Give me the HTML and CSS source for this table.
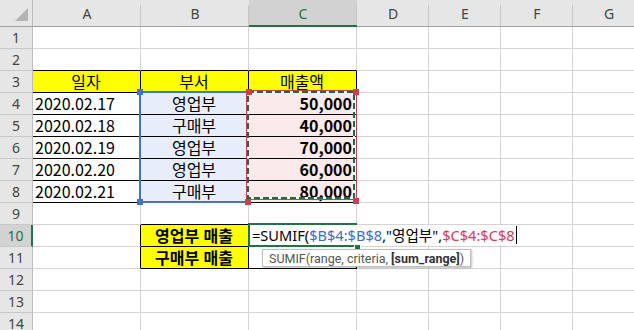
FILE: index.html
```html
<!DOCTYPE html>
<html lang="ko">
<head>
<meta charset="utf-8">
<link rel="stylesheet" href="styles.css">
</head>
<body>
<div class="sheet">
  <div class="corner"><span class="tri"></span></div>
  <div class="ch">A</div><div class="ch">B</div><div class="ch sel">C</div><div class="ch">D</div><div class="ch">E</div><div class="ch">F</div><div class="ch">G</div>

  <div class="rh">1</div><div class="c"></div><div class="c"></div><div class="c"></div><div class="c"></div><div class="c"></div><div class="c"></div><div class="c"></div>
  <div class="rh">2</div><div class="c bb"></div><div class="c bb"></div><div class="c bb"></div><div class="c"></div><div class="c"></div><div class="c"></div><div class="c"></div>
  <div class="rh">3</div><div class="c bk yel ctr">일자</div><div class="c bk yel ctr">부서</div><div class="c bk yel ctr">매출액</div><div class="c"></div><div class="c"></div><div class="c"></div><div class="c"></div>
  <div class="rh">4</div><div class="c bk">2020.02.17</div><div class="c bk blu ctr">영업부</div><div class="c bk pnk num">50,000</div><div class="c"></div><div class="c"></div><div class="c"></div><div class="c"></div>
  <div class="rh">5</div><div class="c bk">2020.02.18</div><div class="c bk blu ctr">구매부</div><div class="c bk pnk num">40,000</div><div class="c"></div><div class="c"></div><div class="c"></div><div class="c"></div>
  <div class="rh">6</div><div class="c bk">2020.02.19</div><div class="c bk blu ctr">영업부</div><div class="c bk pnk num">70,000</div><div class="c"></div><div class="c"></div><div class="c"></div><div class="c"></div>
  <div class="rh">7</div><div class="c bk">2020.02.20</div><div class="c bk blu ctr">영업부</div><div class="c bk pnk num">60,000</div><div class="c"></div><div class="c"></div><div class="c"></div><div class="c"></div>
  <div class="rh">8</div><div class="c bk">2020.02.21</div><div class="c bk blu ctr">구매부</div><div class="c bk pnk num">80,000</div><div class="c"></div><div class="c"></div><div class="c"></div><div class="c"></div>
  <div class="rh">9</div><div class="c"></div><div class="c bb"></div><div class="c bb"></div><div class="c"></div><div class="c"></div><div class="c"></div><div class="c"></div>
  <div class="rh sel">10</div><div class="c br"></div><div class="c bk yel ctr bold">영업부 매출</div><div class="c bk"></div><div class="c"></div><div class="c"></div><div class="c"></div><div class="c"></div>
  <div class="rh">11</div><div class="c br"></div><div class="c bk yel ctr bold">구매부 매출</div><div class="c bk"></div><div class="c"></div><div class="c"></div><div class="c"></div><div class="c"></div>
  <div class="rh">12</div><div class="c"></div><div class="c"></div><div class="c"></div><div class="c"></div><div class="c"></div><div class="c"></div><div class="c"></div>
  <div class="rh">13</div><div class="c"></div><div class="c"></div><div class="c"></div><div class="c"></div><div class="c"></div><div class="c"></div><div class="c"></div>
  <div class="rh">14</div><div class="c"></div><div class="c"></div><div class="c"></div><div class="c"></div><div class="c"></div><div class="c"></div><div class="c"></div>

  <div class="rng-blue"></div>
  <span class="hdl hdl-blue" style="left:137px;top:89px"></span>
  <span class="hdl hdl-blue" style="left:137px;top:199px"></span>

  <div class="rng-red">
    <svg class="ants" width="109" height="108" viewBox="0 0 109 108">
      <rect x="1" y="1" width="106" height="106" fill="none" stroke="#fff" stroke-width="2"/>
      <rect x="1" y="1" width="106" height="106" fill="none" stroke="#1e6b40" stroke-width="2" stroke-dasharray="6 3"/>
    </svg>
  </div>
  <span class="hdl hdl-red" style="left:246px;top:89px"></span>
  <span class="hdl hdl-red" style="left:353px;top:89px"></span>
  <span class="hdl hdl-red" style="left:245px;top:199px"></span>
  <span class="hdl hdl-red" style="left:353px;top:198px"></span>

  <div class="active"></div>
  <div class="edit"><span class="k">=SUMIF(</span><span class="fb">$B$4:$B$8</span><span class="k">,"영업부",</span><span class="fr">$C$4:$C$8</span><span class="caret"></span></div>
  <span class="fill"></span>

  <div class="tip">SUMIF(range, criteria, <b>[sum_range]</b>)</div>
</div>
</body>
</html>
```

FILE: styles.css
```css
html, body {
  margin: 0;
  padding: 0;
  background: #fff;
  width: 634px;
  height: 330px;
  overflow: hidden;
}

.sheet {
  position: relative;
  display: grid;
  grid-template-columns: 33px 108px 108px 108px 72px 72px 72px 72px;
  grid-template-rows: 27px repeat(14, 22px);
  font-family: "Noto Sans CJK KR", "Noto Sans", sans-serif;
  font-size: 16px;
  color: #000;
}

.corner {
  position: relative;
  background: #e6e6e6;
  border-right: 1px solid #bdbdbd;
  border-bottom: 1px solid #9e9e9e;
}
.tri {
  position: absolute;
  right: 4px;
  bottom: 5px;
  width: 0;
  height: 0;
  border-left: 13px solid transparent;
  border-bottom: 13px solid #b4b4b4;
}

.ch {
  position: relative;
  background: #e6e6e6;
  border-bottom: 1px solid #9e9e9e;
  font-family: "Noto Sans", sans-serif;
  font-size: 14px;
  color: #444;
  display: flex;
  align-items: center;
  justify-content: center;
  padding-top: 1px;
  box-sizing: border-box;
}
.ch::after {
  content: "";
  position: absolute;
  right: 0;
  top: 5px;
  bottom: 0;
  width: 1px;
  background: #c4c4c4;
}
.ch.sel {
  background: #d2d2d2;
  color: #217346;
  border-bottom: 2px solid #217346;
}

.rh {
  background: #e6e6e6;
  border-right: 1px solid #bdbdbd;
  border-bottom: 1px solid #c8c8c8;
  font-family: "Noto Sans", sans-serif;
  font-size: 14px;
  color: #444;
  display: flex;
  align-items: center;
  justify-content: center;
  box-sizing: border-box;
}
.rh.sel {
  background: #d2d2d2;
  color: #217346;
  border-right: 2px solid #217346;
}

.c {
  border-right: 1px solid #d4d4d4;
  border-bottom: 1px solid #d4d4d4;
  box-sizing: border-box;
  line-height: 21px;
  padding: 0 3px 0 2px;
  white-space: nowrap;
}
.bk { border-right-color: #000; border-bottom-color: #000; }
.bb { border-bottom-color: #000; }
.br { border-right-color: #000; }
.yel { background: #ffff00; }
.blu { background: #e7eef9; }
.pnk { background: #faeaea; }
.ctr { text-align: center; }
.num { text-align: right; font-weight: 700; padding-right: 4px; }
.bold { font-weight: 700; }

.rng-blue {
  position: absolute;
  left: 139px;
  top: 91px;
  width: 109px;
  height: 112px;
  border: 2px solid #4472c4;
  box-sizing: border-box;
}
.rng-red {
  position: absolute;
  left: 246px;
  top: 90px;
  width: 111px;
  height: 110px;
  border: 1px solid #c8414b;
  box-sizing: border-box;
}
.ants {
  display: block;
}
.hdl {
  position: absolute;
  width: 6px;
  height: 6px;
}
.hdl-blue { background: #4472c4; }
.hdl-red { background: #c8414b; }

.active {
  position: absolute;
  left: 248px;
  top: 223px;
  width: 109px;
  height: 24px;
  border: 2px solid #217346;
  box-sizing: border-box;
}
.edit {
  position: absolute;
  left: 250px;
  top: 225px;
  height: 20px;
  padding: 0 4px 0 2px;
  background: #fff;
  font-family: "Noto Sans", "Noto Sans CJK KR", sans-serif;
  font-size: 14.6px;
  line-height: 20px;
  white-space: nowrap;
  display: flex;
  align-items: center;
}
.fb { color: #3e6fc6; }
.fr { color: #d73a5a; }
.caret {
  display: inline-block;
  width: 1px;
  height: 18px;
  background: #000;
  margin-left: 1px;
}
.fill {
  position: absolute;
  left: 354px;
  top: 244px;
  width: 5px;
  height: 5px;
  background: #217346;
  border: 1px solid #fff;
}

.tip {
  position: absolute;
  left: 262px;
  top: 249px;
  height: 18px;
  padding: 0 6px;
  background: #fff;
  border: 1px solid #bcbcbc;
  box-shadow: 1px 1px 2px rgba(0,0,0,0.25);
  font-family: Roboto, "Noto Sans", sans-serif;
  font-size: 12.5px;
  line-height: 17px;
  color: #555;
  white-space: nowrap;
  box-sizing: border-box;
}
.tip b { color: #333; }
```
